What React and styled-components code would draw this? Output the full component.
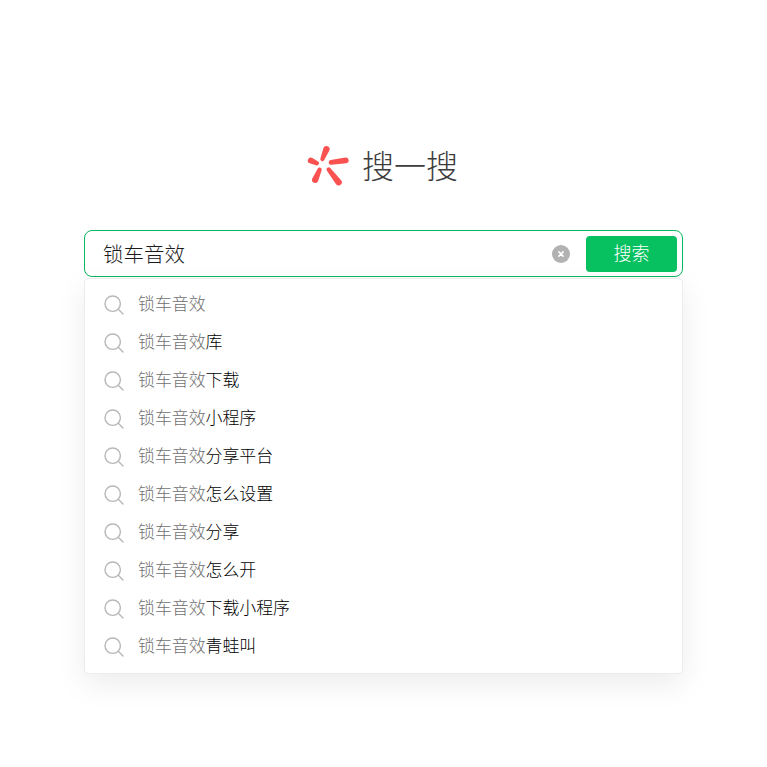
import React from 'react'
import styled, { createGlobalStyle } from 'styled-components'

const suggestions = ['', '库', '下载', '小程序', '分享平台', '怎么设置', '分享', '怎么开', '下载小程序', '青蛙叫']
const query = '锁车音效'

// petals of the logo: outer end, outer radius, inner end, inner radius
const petals = [
    [19.4, 4.2, 3.2, 15.4, 14, 2.1],
    [3.8, 15.6, 3, 9.8, 18.2, 2.2],
    [38.8, 15.4, 2.9, 24, 17.4, 2.3],
    [8.2, 34.8, 3.2, 12.6, 24.6, 2.1],
    [31.6, 37.2, 3.2, 21.6, 24.4, 2.1],
]

const petalPath = ([x1, y1, r1, x2, y2, r2]) => {
    const len = Math.hypot(x2 - x1, y2 - y1)
    const nx = -(y2 - y1) / len
    const ny = (x2 - x1) / len
    return `M${x1 + nx * r1} ${y1 + ny * r1} L${x2 + nx * r2} ${y2 + ny * r2}
        A${r2} ${r2} 0 0 0 ${x2 - nx * r2} ${y2 - ny * r2}
        L${x1 - nx * r1} ${y1 - ny * r1}
        A${r1} ${r1} 0 0 0 ${x1 + nx * r1} ${y1 + ny * r1} Z`
}

const GlobalStyle = createGlobalStyle`
    html, body {
        margin: 0;
        padding: 0;
        background: #fff;
    }
    body {
        font-family: "Noto Sans CJK SC", "Liberation Sans", sans-serif;
    }
`

function Logo() {
    return (
        <LogoSvg viewBox="0 0 42 42">
            {petals.map((petal) => (
                <path key={petal[0]} d={petalPath(petal)} fill="#fa5151" />
            ))}
        </LogoSvg>
    )
}

function SearchIcon() {
    return (
        <IconSvg viewBox="0 0 20 20">
            <circle cx="8.7" cy="8.7" r="7.7" fill="none" stroke="#b8b8b8" strokeWidth="1.4" />
            <path d="M14.3 14.3 L19 19" stroke="#b8b8b8" strokeWidth="1.4" strokeLinecap="round" />
        </IconSvg>
    )
}

function ClearIcon() {
    return (
        <ClearSvg viewBox="0 0 18 18">
            <circle cx="9" cy="9" r="9" fill="#b2b2b2" />
            <path d="M6.4 6.4 L11.6 11.6 M11.6 6.4 L6.4 11.6" stroke="#fff" strokeWidth="1.5" />
        </ClearSvg>
    )
}

export default function App() {
    return (
        <Page>
            <GlobalStyle />
            <Brand>
                <Logo />
                <BrandName>搜一搜</BrandName>
            </Brand>
            <SearchBox>
                <Query>{query}</Query>
                <ClearIcon />
                <SearchButton>搜索</SearchButton>
            </SearchBox>
            <Dropdown>
                {suggestions.map((rest) => (
                    <Row key={rest}>
                        <SearchIcon />
                        <RowText>
                            <Match>{query}</Match>{rest}
                        </RowText>
                    </Row>
                ))}
            </Dropdown>
        </Page>
    )
}

const Page = styled.div`
    width: 767px;
    height: 767px;
    overflow: hidden;
    box-sizing: border-box;
    padding: 144px 84px 0 84px;
    background: #fff;
`
const Brand = styled.div`
    display: flex;
    align-items: center;
    justify-content: center;
    gap: 13px;
    height: 44px;
    margin-bottom: 42px;
    padding-right: 2px;
`
const LogoSvg = styled.svg`
    width: 42px;
    height: 42px;
    display: block;
`
const BrandName = styled.div`
    font-size: 32px;
    font-weight: 300;
    line-height: 44px;
    color: #3c3c3c;
    margin-bottom: 4px;
`
const SearchBox = styled.div`
    box-sizing: border-box;
    width: 599px;
    height: 47px;
    border: 1px solid #07b860;
    border-radius: 8px;
    display: flex;
    align-items: center;
    padding: 0 5px 0 18px;
    background: #fff;
`
const Query = styled.div`
    flex: 1;
    font-size: 20.5px;
    font-weight: 300;
    line-height: 30px;
    color: #1c1c1c;
    margin-bottom: 2px;
`
const ClearSvg = styled.svg`
    width: 18px;
    height: 18px;
    margin-right: 16px;
    display: block;
`
const SearchButton = styled.button`
    width: 91px;
    height: 36px;
    border: none;
    border-radius: 4px;
    background: #07c160;
    color: #fff;
    font-family: inherit;
    font-size: 18px;
    font-weight: 300;
    line-height: 32px;
    padding: 0 0 6px 0;
`
const Dropdown = styled.div`
    box-sizing: border-box;
    width: 599px;
    height: 396px;
    margin-top: 1px;
    padding: 7px 0 0 0;
    background: #fff;
    border: 1px solid #ececec;
    border-radius: 4px;
    box-shadow: 0 10px 30px rgba(0, 0, 0, 0.08);
`
const Row = styled.div`
    display: flex;
    align-items: center;
    height: 38px;
    padding-left: 19px;
`
const IconSvg = styled.svg`
    width: 20px;
    height: 20px;
    display: block;
    margin-right: 14px;
`
const RowText = styled.div`
    font-size: 16.9px;
    font-weight: 300;
    line-height: 26px;
    color: #000;
    margin-bottom: 4px;
`
const Match = styled.span`
    color: #707070;
`
